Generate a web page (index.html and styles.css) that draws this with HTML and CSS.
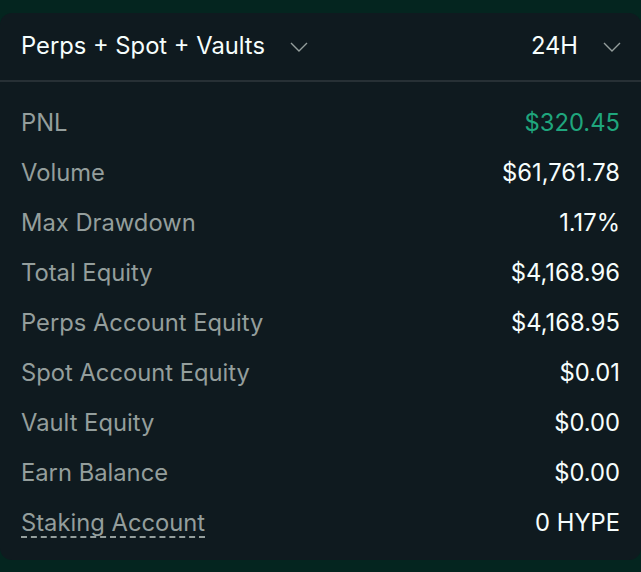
FILE: index.html
```html
<!DOCTYPE html>
<html>
<head>
<meta charset="utf-8">
<link rel="stylesheet" href="styles.css">
</head>
<body>
<div class="card">
  <div class="header">
    <div class="select">
      <span class="sel-text">Perps + Spot + Vaults</span>
      <svg class="chev" width="18" height="10" viewBox="0 0 18 10"><path d="M1 1 L9 9 L17 1" fill="none" stroke="#949e9c" stroke-width="1.4"/></svg>
    </div>
    <div class="select">
      <span class="sel-text">24H</span>
      <svg class="chev" width="18" height="10" viewBox="0 0 18 10"><path d="M1 1 L9 9 L17 1" fill="none" stroke="#949e9c" stroke-width="1.4"/></svg>
    </div>
  </div>
  <div class="rows">
    <div class="row"><span class="label">PNL</span><span class="value green">$320.45</span></div>
    <div class="row"><span class="label">Volume</span><span class="value">$61,761.78</span></div>
    <div class="row"><span class="label">Max Drawdown</span><span class="value">1.17%</span></div>
    <div class="row"><span class="label">Total Equity</span><span class="value">$4,168.96</span></div>
    <div class="row"><span class="label">Perps Account Equity</span><span class="value">$4,168.95</span></div>
    <div class="row"><span class="label">Spot Account Equity</span><span class="value">$0.01</span></div>
    <div class="row"><span class="label">Vault Equity</span><span class="value">$0.00</span></div>
    <div class="row"><span class="label">Earn Balance</span><span class="value">$0.00</span></div>
    <div class="row"><span class="label dashed">Staking Account</span><span class="value">0 HYPE</span></div>
  </div>
</div>
</body>
</html>
```
FILE: styles.css
```css
html, body {
  margin: 0;
  padding: 0;
  background: #04251f;
  width: 641px;
  height: 572px;
  overflow: hidden;
}
body {
  font-family: Inter, "Noto Sans", sans-serif;
  padding-top: 13px;
}
.card {
  background: #0f1a1f;
  border-radius: 12px;
  width: 641px;
  height: 547px;
  box-sizing: border-box;
}
.header {
  display: flex;
  justify-content: space-between;
  align-items: center;
  height: 69px;
  box-sizing: border-box;
  padding: 0 20px 2px 21px;
  border-bottom: 2px solid #273035;
}
.select {
  display: flex;
  align-items: center;
  gap: 25px;
}
.chev {
  margin-top: 2px;
}
.sel-text {
  color: #f6fefd;
  font-size: 23.75px;
}
.rows {
  padding: 15px 21px 0 21px;
}
.row {
  display: flex;
  justify-content: space-between;
  align-items: center;
  height: 50px;
  font-size: 23.75px;
}
.label {
  color: #949e9c;
}
.value {
  color: #f6fefd;
}
.green {
  color: #1fa67d;
}
.dashed {
  text-decoration: underline dashed #949e9c;
  text-decoration-thickness: 2px;
  text-underline-offset: 6px;
}
```
